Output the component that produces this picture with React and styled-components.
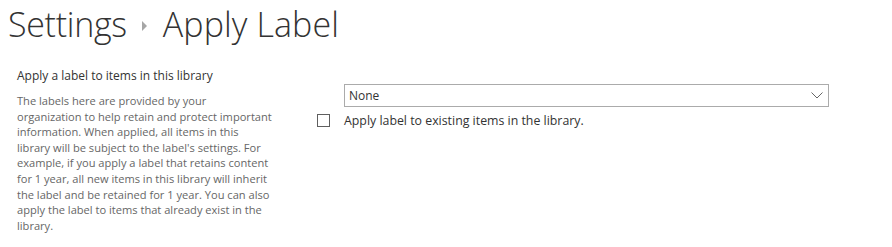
import React from "react";
import styled, { createGlobalStyle } from "styled-components";

const Global = createGlobalStyle`
  html, body { margin: 0; padding: 0; background: #fff; }
  body { font-family: "Open Sans", "Noto Sans", sans-serif; }
`;

const Page = styled.div`
  width: 892px;
  height: 247px;
  overflow: hidden;
  background: #fff;
`;

const TitleRow = styled.h1`
  margin: 0;
  padding: 2px 0 0 8px;
  display: flex;
  align-items: center;
  gap: 15px;
  font-weight: 300;
  font-size: 34px;
  line-height: 44px;
  color: #333;
`;

const Crumb = styled.span`
  letter-spacing: ${(p) => p.$ls || "-0.3px"};
`;

const Sep = styled.svg`
  width: 6px;
  height: 10px;
  margin-top: 4px;
`;

const Section = styled.div`
  display: flex;
  padding: 22px 0 0 17px;
`;

const LeftCol = styled.div`
  width: 272px;
  flex: none;
`;

const SectionTitle = styled.div`
  font-size: 12px;
  color: #333;
  line-height: 16px;
  margin-bottom: 9px;
`;

const Desc = styled.div`
  font-size: 11.1px;
  color: #666;
  line-height: 15.6px;
  white-space: nowrap;
`;

const RightCol = styled.div`
  margin-left: 28px;
  padding-top: 16px;
  display: flex;
  flex-direction: column;
`;

const Select = styled.div`
  margin-left: 27px;
  width: 485px;
  height: 23px;
  box-sizing: border-box;
  border: 1px solid #ababab;
  display: flex;
  align-items: center;
  justify-content: space-between;
  padding: 0 5px 0 4px;
  font-size: 12px;
  color: #333;
`;

const CheckRow = styled.label`
  display: flex;
  align-items: center;
  gap: 14px;
  margin-top: 5px;
  font-size: 12.35px;
  color: #333;
`;

const Box = styled.span`
  width: 13px;
  height: 13px;
  box-sizing: border-box;
  border: 1px solid #5f5f5f;
  background: #fff;
`;

const lines = [
  "The labels here are provided by your",
  "organization to help retain and protect important",
  "information. When applied, all items in this",
  "library will be subject to the label's settings. For",
  "example, if you apply a label that retains content",
  "for 1 year, all new items in this library will inherit",
  "the label and be retained for 1 year. You can also",
  "apply the label to items that already exist in the",
  "library.",
];

export default function App() {
  return (
    <Page>
      <Global />
      <TitleRow>
        <Crumb>Settings</Crumb>
        <Sep viewBox="0 0 6 10">
          <path d="M0 0 L5 5 L0 10 Z" fill="#a6a6a6" />
        </Sep>
        <Crumb $ls="0.1px">Apply Label</Crumb>
      </TitleRow>
      <Section>
        <LeftCol>
          <SectionTitle>Apply a label to items in this library</SectionTitle>
          <Desc>
            {lines.map((l, i) => (
              <React.Fragment key={i}>
                {l}
                {i < lines.length - 1 && <br />}
              </React.Fragment>
            ))}
          </Desc>
        </LeftCol>
        <RightCol>
          <Select>
            <span>None</span>
            <svg width="12" height="7" viewBox="0 0 12 7">
              <path d="M0.5 0.5 L6 6 L11.5 0.5" fill="none" stroke="#666" strokeWidth="1" />
            </svg>
          </Select>
          <CheckRow>
            <Box />
            <span>Apply label to existing items in the library.</span>
          </CheckRow>
        </RightCol>
      </Section>
    </Page>
  );
}
